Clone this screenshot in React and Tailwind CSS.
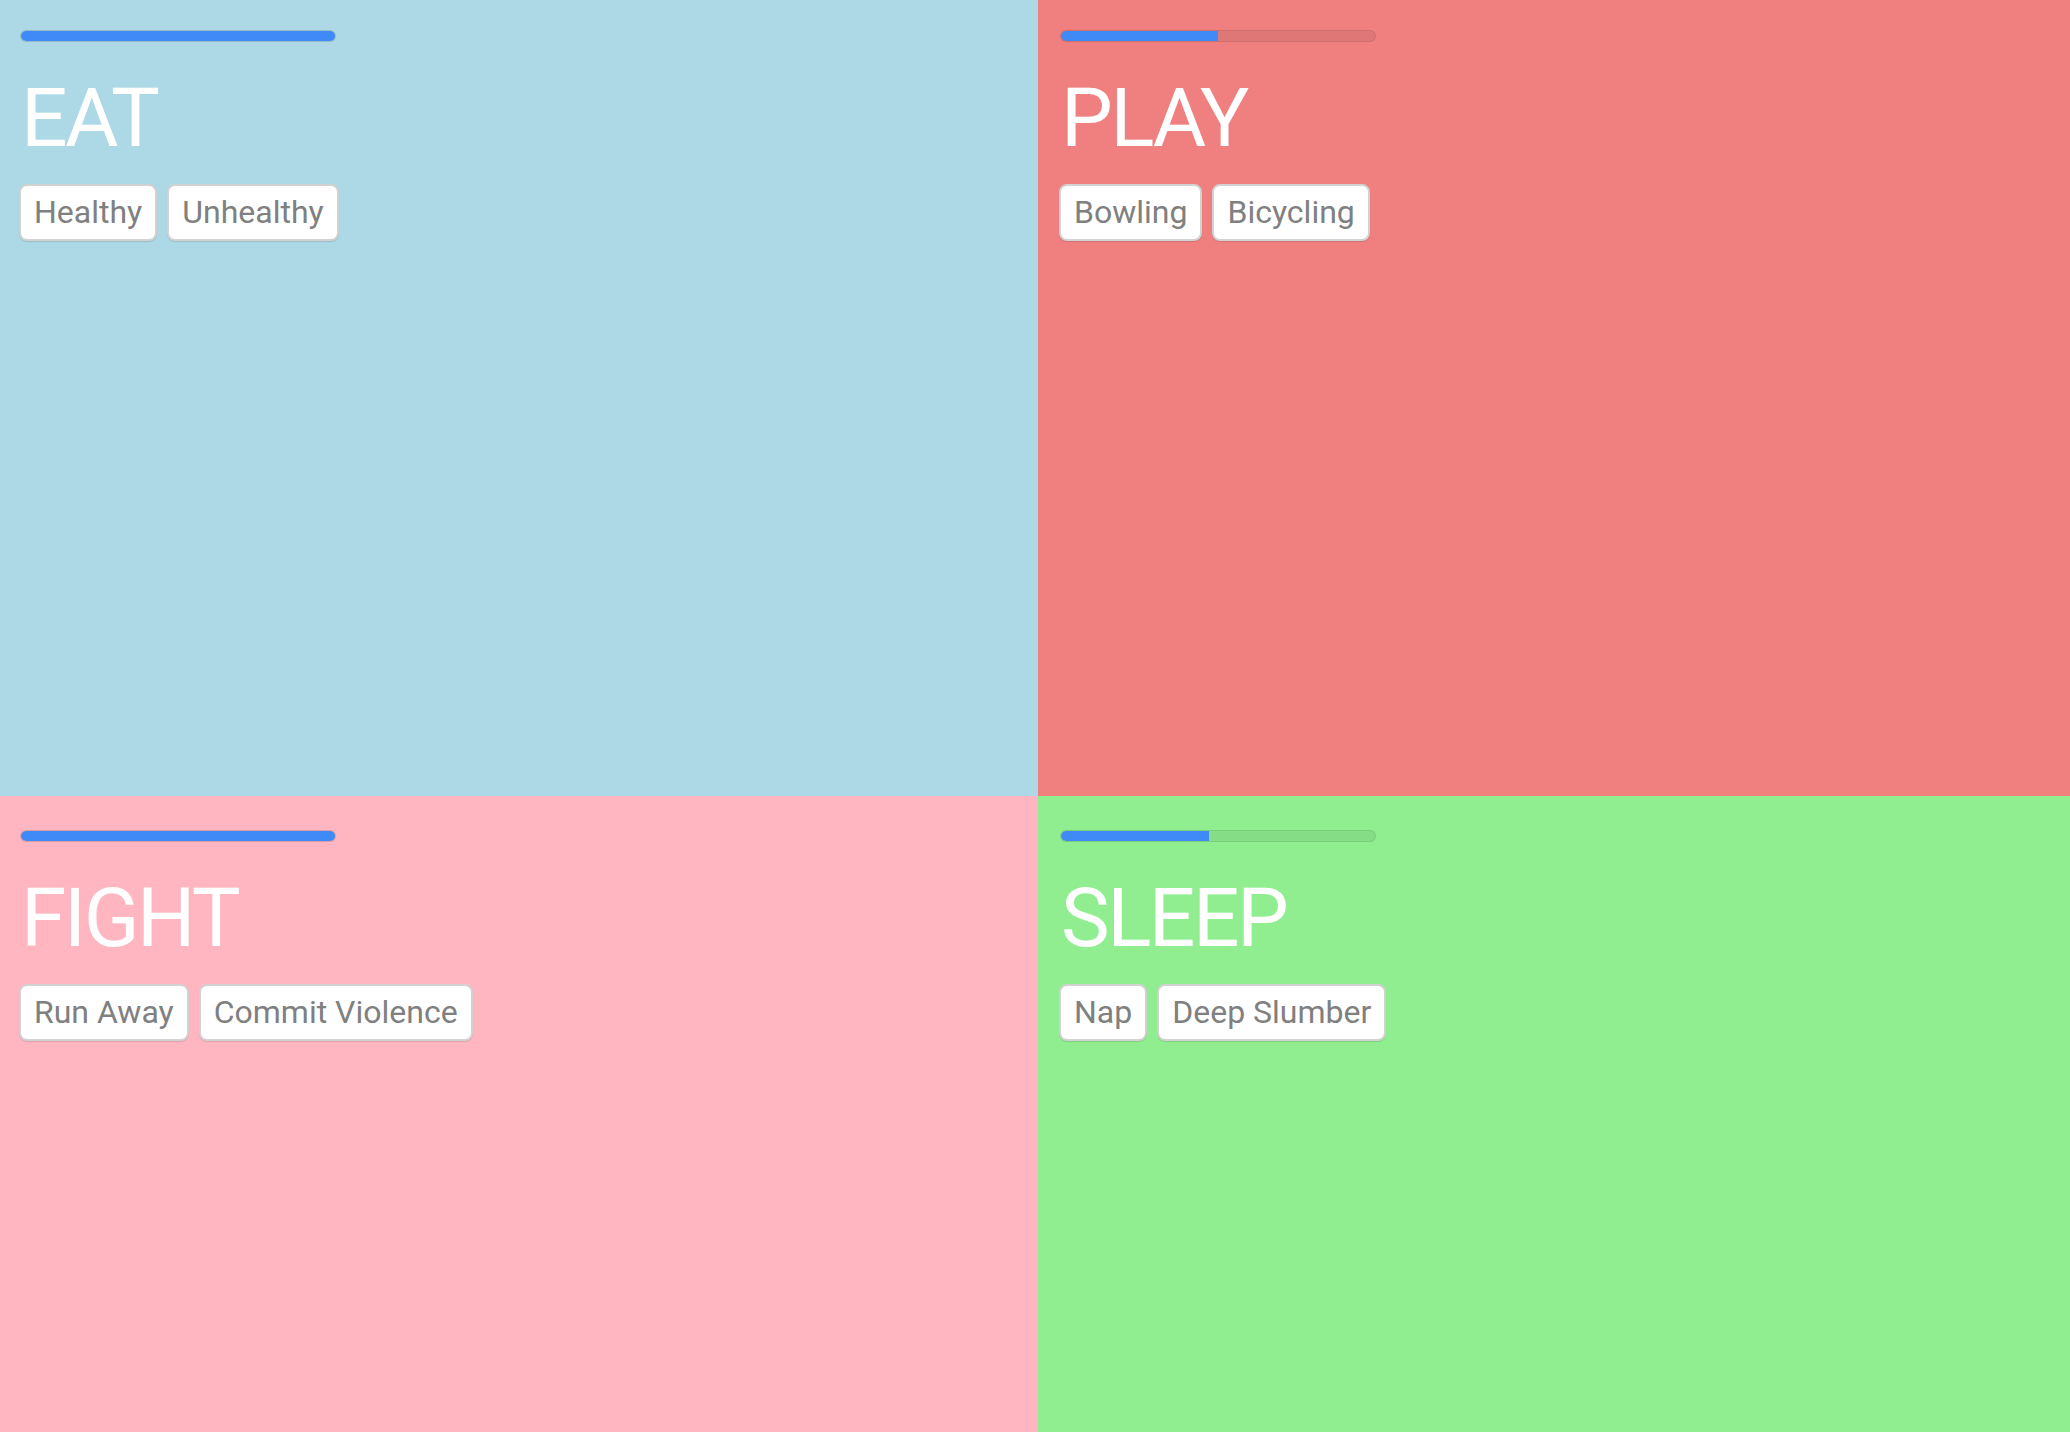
import React from 'react'

const panels = [
  { title: 'EAT', bg: 'bg-[#add8e6]', progress: 100, options: ['Healthy', 'Unhealthy'], pad: 'pt-[30px] pl-[20px]' },
  { title: 'PLAY', bg: 'bg-[#f08080]', progress: 50, options: ['Bowling', 'Bicycling'], pad: 'pt-[30px] pl-[22px]' },
  { title: 'FIGHT', bg: 'bg-[#ffb6c1]', progress: 100, options: ['Run Away', 'Commit Violence'], pad: 'pt-[34px] pl-[20px]' },
  { title: 'SLEEP', bg: 'bg-[#90ee90]', progress: 47, options: ['Nap', 'Deep Slumber'], pad: 'pt-[34px] pl-[22px]' },
]

function Panel({ panel }) {
  return (
    <div className={`${panel.bg} ${panel.pad} overflow-hidden`}>
      {/* barre de progression */}
      <div className="w-[316px] h-[12px] rounded-full bg-black/[0.07] border border-black/[0.08] overflow-hidden">
        <div className="h-full bg-[#3f8af7] rounded-l-full" style={{ width: `${panel.progress}%` }} />
      </div>
      <h1 className="mt-[35px] ml-[1px] text-[82px] leading-[82px] tracking-[-2.5px] font-normal text-white">
        {panel.title}
      </h1>
      <div className="mt-[25px] -ml-[1px] flex gap-[10px]">
        {panel.options.map(o => (
          <button
            key={o}
            className="h-[57px] px-[13px] flex items-center bg-white border-2 border-[#d2d2d2] rounded-[8px] shadow-[0_1px_1px_rgba(0,0,0,0.12)] text-[32px] leading-[37px] text-[#808080]"
          >
            {o}
          </button>
        ))}
      </div>
    </div>
  )
}

export default function App() {
  return (
    <div
      className="w-[2070px] h-[1432px] grid grid-cols-[1038px_1fr] grid-rows-[796px_1fr]"
      style={{ fontFamily: 'Roboto, "Liberation Sans", sans-serif' }}
    >
      {panels.map(p => (
        <Panel key={p.title} panel={p} />
      ))}
    </div>
  )
}
